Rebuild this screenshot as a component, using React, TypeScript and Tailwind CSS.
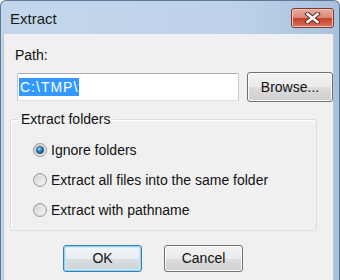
const font = { fontFamily: '"Liberation Sans", Arial, sans-serif' };

const Radio = ({ checked, label }: { checked?: boolean; label: string }) => (
  <label className="flex h-[20px] items-center gap-[4px]">
    <svg width="14" height="14" viewBox="0 0 14 14">
      <defs>
        <linearGradient id="rb" x1="0" y1="0" x2="1" y2="1">
          <stop offset="0" stopColor="#cbcbcb" />
          <stop offset="1" stopColor="#ffffff" />
        </linearGradient>
        <radialGradient id="dot" cx="0.4" cy="0.35" r="0.7">
          <stop offset="0" stopColor="#a8dcf8" />
          <stop offset="0.5" stopColor="#2d7db3" />
          <stop offset="1" stopColor="#16476d" />
        </radialGradient>
      </defs>
      <circle cx="7" cy="7" r="6.4" fill="url(#rb)" stroke="#8e8f8f" />
      <circle cx="7" cy="7" r="5" fill="none" stroke="#e6e6e6" />
      {checked && <circle cx="7" cy="7" r="3.8" fill="url(#dot)" stroke="#1d4e74" strokeWidth="0.6" />}
    </svg>
    <span className="text-[14px] leading-[16px] text-[#111]">{label}</span>
  </label>
);

const Button = ({ label, focused }: { label: string; focused?: boolean }) => (
  <button
    className={
      focused
        ? "flex h-[27px] w-[79px] items-center justify-center rounded-[3px] border border-[#3c7fb1] bg-[linear-gradient(#f1f5f7_0%,#eaeef0_50%,#dadfe2_50%,#cdd3d6_100%)] text-[14px] text-[#111] shadow-[inset_0_0_0_1px_#8fd4f3,inset_0_0_0_2px_#c8ecfb]"
        : "flex h-[27px] w-[79px] items-center justify-center rounded-[3px] border border-[#707070] bg-[linear-gradient(#f2f2f2_0%,#ebebeb_50%,#dddddd_50%,#cfcfcf_100%)] text-[14px] text-[#111] shadow-[inset_0_0_0_1px_#fbfbfb]"
    }
  >
    {label}
  </button>
);

export default function App() {
  return (
    <div className="h-[280px] w-[340px] overflow-hidden bg-white" style={font}>
      <div className="flex h-full flex-col rounded-t-[6px] border border-b-0 border-[#5f7896] bg-[linear-gradient(90deg,#c3d7ec,#bdd2e9_70%,#a8c1de)]">
        {/* title bar */}
        <div className="flex h-[33px] shrink-0 items-start">
          <span className="ml-[9px] mt-[9px] text-[15px] leading-[18px] text-[#1a1a1a]">Extract</span>
          <div className="ml-auto mr-[5px] mt-[7px] flex h-[20px] w-[43px] items-center justify-center rounded-[3px] border border-[#7b3a32] bg-[linear-gradient(#e9ad9f_0%,#d98675_48%,#c5432c_52%,#d8735c_100%)] shadow-[inset_0_0_0_1px_#f0c2b6]">
            <svg width="17" height="12" viewBox="0 0 17 12">
              <path d="M3.5 2 L13.5 10 M13.5 2 L3.5 10" stroke="#5a1f18" strokeWidth="4.4" strokeLinecap="square" />
              <path d="M3.5 2 L13.5 10 M13.5 2 L3.5 10" stroke="#ffffff" strokeWidth="2.6" strokeLinecap="square" />
            </svg>
          </div>
        </div>

        {/* client area */}
        <div className="ml-[2px] mr-[5px] flex flex-1 flex-col border-x border-[#b7c4d3] bg-[#f0f0f0] text-[#111]">
          <span className="ml-[11px] mt-[13px] text-[14px] leading-[16px]">Path:</span>

          <div className="ml-[13px] mt-[9px] flex items-center">
            <div className="flex h-[28px] w-[222px] items-center rounded-[2px] border border-[#abadb3] border-b-[#dbdfe6] border-x-[#c6cad2] bg-white pl-[1px]">
              <span className="bg-[#3399ff] px-[1px] text-[14px] leading-[18px] tracking-[1px] text-white">C:\TMP\</span>
            </div>
            <div className="ml-[8px] flex h-[30px] w-[86px] items-center justify-center rounded-[3px] border border-[#707070] bg-[linear-gradient(#f2f2f2_0%,#ebebeb_50%,#dddddd_50%,#cfcfcf_100%)] text-[14px] shadow-[inset_0_0_0_1px_#fbfbfb]">
              Browse...
            </div>
          </div>

          <fieldset className="ml-[6px] mt-[9px] w-[307px] rounded-[3px] border border-[#d5dfe5] pb-[10px] pl-[22px] shadow-[inset_1px_1px_0_#ffffff]">
            <legend className="ml-[-15px] px-[3px] text-[14px] leading-[16px]">Extract folders</legend>
            <div className="mt-[13px] flex flex-col gap-[10px]">
              <Radio checked label="Ignore folders" />
              <Radio label="Extract all files into the same folder" />
              <Radio label="Extract with pathname" />
            </div>
          </fieldset>

          <div className="ml-[59px] mt-[14px] flex gap-[22px]">
            <Button focused label="OK" />
            <Button label="Cancel" />
          </div>
        </div>
      </div>
    </div>
  );
}
